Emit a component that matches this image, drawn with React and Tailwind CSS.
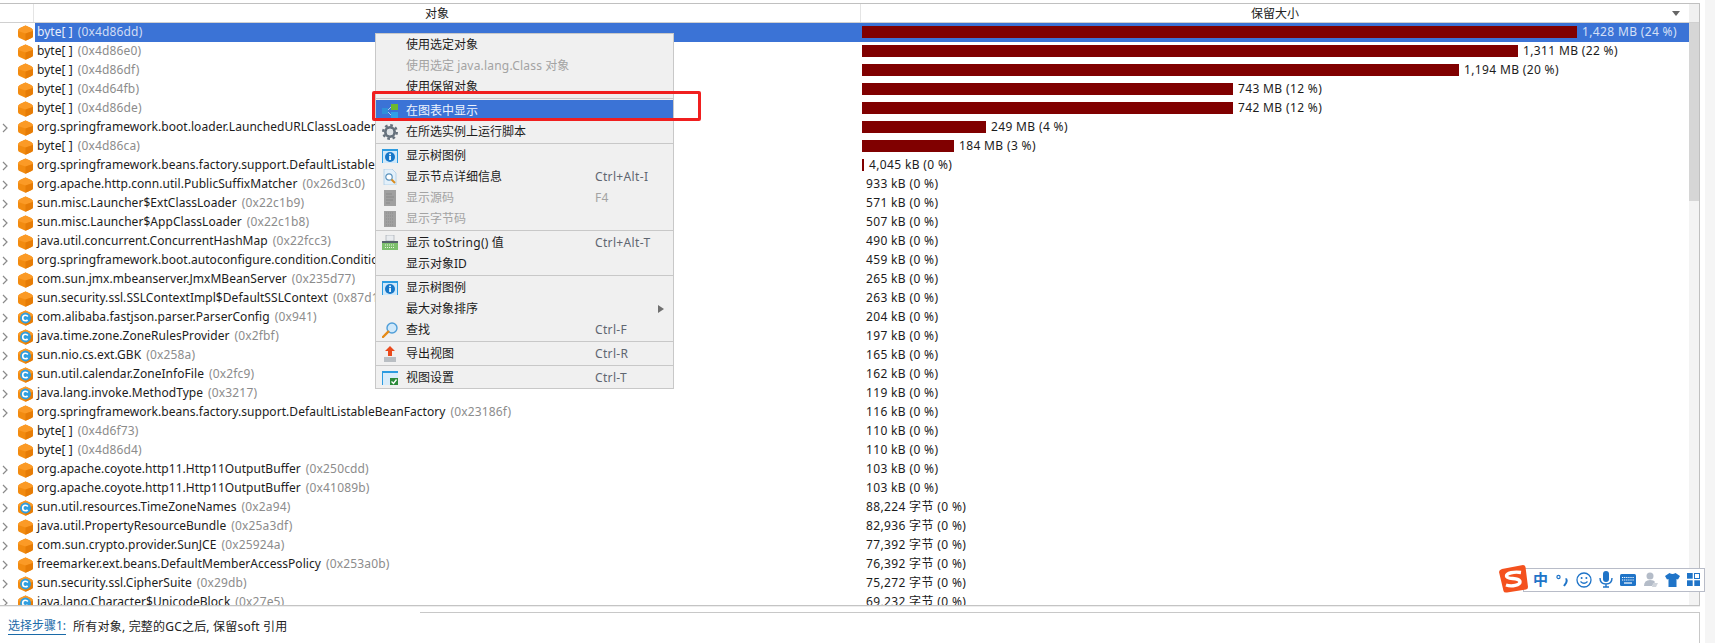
const rows = [
  { name: 'byte[ ]', addr: '(0x4d86dd)', size: '1,428 MB (24 %)', bar: 715, selected: true },
  { name: 'byte[ ]', addr: '(0x4d86e0)', size: '1,311 MB (22 %)', bar: 656 },
  { name: 'byte[ ]', addr: '(0x4d86df)', size: '1,194 MB (20 %)', bar: 597 },
  { name: 'byte[ ]', addr: '(0x4d64fb)', size: '743 MB (12 %)', bar: 371 },
  { name: 'byte[ ]', addr: '(0x4d86de)', size: '742 MB (12 %)', bar: 371 },
  { name: 'org.springframework.boot.loader.LaunchedURLClassLoader', addr: '(0x2f1c9)', size: '249 MB (4 %)', bar: 124, open: true },
  { name: 'byte[ ]', addr: '(0x4d86ca)', size: '184 MB (3 %)', bar: 92 },
  { name: 'org.springframework.beans.factory.support.DefaultListableBeanFactory', addr: '(0x2318a)', size: '4,045 kB (0 %)', bar: 2, open: true },
  { name: 'org.apache.http.conn.util.PublicSuffixMatcher', addr: '(0x26d3c0)', size: '933 kB (0 %)', open: true },
  { name: 'sun.misc.Launcher$ExtClassLoader', addr: '(0x22c1b9)', size: '571 kB (0 %)', open: true },
  { name: 'sun.misc.Launcher$AppClassLoader', addr: '(0x22c1b8)', size: '507 kB (0 %)', open: true },
  { name: 'java.util.concurrent.ConcurrentHashMap', addr: '(0x22fcc3)', size: '490 kB (0 %)', open: true },
  { name: 'org.springframework.boot.autoconfigure.condition.ConditionEvaluationReport', addr: '', size: '459 kB (0 %)', open: true },
  { name: 'com.sun.jmx.mbeanserver.JmxMBeanServer', addr: '(0x235d77)', size: '265 kB (0 %)', open: true },
  { name: 'sun.security.ssl.SSLContextImpl$DefaultSSLContext', addr: '(0x87d1)', size: '263 kB (0 %)', open: true },
  { name: 'com.alibaba.fastjson.parser.ParserConfig', addr: '(0x941)', size: '204 kB (0 %)', open: true, cls: true },
  { name: 'java.time.zone.ZoneRulesProvider', addr: '(0x2fbf)', size: '197 kB (0 %)', open: true, cls: true },
  { name: 'sun.nio.cs.ext.GBK', addr: '(0x258a)', size: '165 kB (0 %)', open: true, cls: true },
  { name: 'sun.util.calendar.ZoneInfoFile', addr: '(0x2fc9)', size: '162 kB (0 %)', open: true, cls: true },
  { name: 'java.lang.invoke.MethodType', addr: '(0x3217)', size: '119 kB (0 %)', open: true, cls: true },
  { name: 'org.springframework.beans.factory.support.DefaultListableBeanFactory', addr: '(0x23186f)', size: '116 kB (0 %)', open: true },
  { name: 'byte[ ]', addr: '(0x4d6f73)', size: '110 kB (0 %)' },
  { name: 'byte[ ]', addr: '(0x4d86d4)', size: '110 kB (0 %)' },
  { name: 'org.apache.coyote.http11.Http11OutputBuffer', addr: '(0x250cdd)', size: '103 kB (0 %)', open: true },
  { name: 'org.apache.coyote.http11.Http11OutputBuffer', addr: '(0x41089b)', size: '103 kB (0 %)', open: true },
  { name: 'sun.util.resources.TimeZoneNames', addr: '(0x2a94)', size: '88,224 字节 (0 %)', open: true, cls: true },
  { name: 'java.util.PropertyResourceBundle', addr: '(0x25a3df)', size: '82,936 字节 (0 %)', open: true },
  { name: 'com.sun.crypto.provider.SunJCE', addr: '(0x25924a)', size: '77,392 字节 (0 %)', open: true },
  { name: 'freemarker.ext.beans.DefaultMemberAccessPolicy', addr: '(0x253a0b)', size: '76,392 字节 (0 %)', open: true },
  { name: 'sun.security.ssl.CipherSuite', addr: '(0x29db)', size: '75,272 字节 (0 %)', open: true, cls: true },
  { name: 'java.lang.Character$UnicodeBlock', addr: '(0x27e5)', size: '69,232 字节 (0 %)', open: true, cls: true },
];

const HEX = 'M7.5 0.5 L13 3 Q15 4 15 6 L15 11 Q15 12.5 13.5 13 L7.5 15.8 L1.5 13 Q0 12.5 0 11 L0 6 Q0 4 2 3 Z';

function NodeIcon({ cls }) {
  return (
    <svg width="15" height="16" viewBox="0 0 15 16" className="shrink-0">
      <path d={HEX} fill="#f28b10" />
      <path d="M7.5 0.5 L13 3 Q15 4 15 6 L7.5 8.5 L0 6 Q0 4 2 3 Z" fill="#fb9a26" />
      <path d="M7.5 8.5 L15 6 L15 11 Q15 12.5 13.5 13 L7.5 15.8 Z" fill="#e67c06" />
      {cls && <circle cx="7.5" cy="8" r="5.4" fill="#2f9ee0" />}
      {cls && <circle cx="7.5" cy="8" r="2.8" fill="none" stroke="#fff" strokeWidth="1.6" strokeDasharray="13.5 4.1" strokeDashoffset="-2" />}
    </svg>
  );
}

function Chevron() {
  return (
    <svg width="6" height="10" viewBox="0 0 6 10" className="shrink-0">
      <path d="M1 1 L5 5 L1 9" fill="none" stroke="#8a8a8a" strokeWidth="1.2" />
    </svg>
  );
}

function Row({ row }) {
  const { name, addr, size, bar, open, cls, selected } = row;
  return (
    <div className="flex h-[19px] shrink-0 items-center">
      <div className="flex w-[18px] shrink-0 items-center pl-[2px]">{open && <Chevron />}</div>
      <NodeIcon cls={cls} />
      <div className={`ml-[2px] flex h-full w-[826px] shrink-0 items-center overflow-hidden whitespace-nowrap pb-[1px] pl-[2px] tracking-[0.05px] ${selected ? 'bg-[#3b73d6] text-[#e8eefb]' : 'text-[#1c1c1c]'}`}>
        {name}
        {addr && <span className={`ml-[5px] tracking-[0.15px] ${selected ? 'text-[#d0dcf4]' : 'text-[#8c8c8c]'}`}>{addr}</span>}
      </div>
      <div className={`flex h-full flex-1 items-center whitespace-nowrap pb-[1px] pl-[1px] tracking-[0.35px] ${selected ? 'bg-[#3b73d6] text-[#d5e0f6]' : 'text-[#1c1c1c]'}`}>
        {bar ? <div className="h-[12px] bg-[#800000]" style={{ width: bar }} /> : null}
        <span className={bar ? 'ml-[5px]' : 'ml-[4px]'}>{size}</span>
      </div>
    </div>
  );
}

function ChartIcon() {
  return (
    <svg width="16" height="14" viewBox="0 0 16 14">
      <rect x="0" y="4" width="6" height="6" fill="#2f8fd8" />
      <rect x="9" y="0" width="7" height="6" fill="#6cb82e" />
      <rect x="9" y="8" width="7" height="6" fill="#2f9fe8" />
      <path d="M6 6 L9 3 M6 8 L9 11" stroke="#a9cdec" strokeWidth="1" />
    </svg>
  );
}

function GearIcon() {
  return (
    <svg width="16" height="16" viewBox="0 0 16 16">
      <circle cx="8" cy="8" r="4.6" fill="none" stroke="#66717c" strokeWidth="2.8" />
      <circle cx="8" cy="8" r="6.8" fill="none" stroke="#66717c" strokeWidth="2.4" strokeDasharray="2.67 2.67" />
      <circle cx="8" cy="8" r="3.2" fill="#dfe3e6" />
    </svg>
  );
}

function InfoIcon() {
  return (
    <svg width="16" height="14" viewBox="0 0 16 14">
      <rect x="0" y="0" width="16" height="14" fill="#cfe8fa" />
      <rect x="0" y="0" width="16" height="2" fill="#2c9be0" />
      <rect x="0" y="0" width="1" height="14" fill="#2c9be0" />
      <rect x="15" y="0" width="1" height="14" fill="#2c9be0" />
      <circle cx="8" cy="8" r="5" fill="#1677c8" />
      <rect x="7.2" y="7" width="1.7" height="4" fill="#fff" />
      <rect x="7.2" y="4.6" width="1.7" height="1.6" fill="#fff" />
    </svg>
  );
}

function DetailIcon() {
  return (
    <svg width="14" height="16" viewBox="0 0 14 16">
      <path d="M1 0 H9 L13 4 V16 H1 Z" fill="#e3f0fa" stroke="#a9cbe6" strokeWidth="0.8" />
      <circle cx="6" cy="8" r="3.2" fill="#fff" stroke="#5b93bd" strokeWidth="1.2" />
      <path d="M8.5 10.5 L12 14" stroke="#d98b1e" strokeWidth="2" />
    </svg>
  );
}

function SourceIcon() {
  return (
    <svg width="12" height="16" viewBox="0 0 12 16">
      <rect width="12" height="16" fill="#a0a0a0" />
      <path d="M2 4 H8 M2 7 H10 M2 10 H9 M2 13 H6" stroke="#8a8a8a" strokeWidth="1" />
    </svg>
  );
}

function BytesIcon() {
  return (
    <svg width="12" height="16" viewBox="0 0 12 16">
      <rect width="12" height="16" fill="#a0a0a0" />
      <path d="M2 2 H10 M2 5 H10 M2 8 H10 M2 11 H10 M2 14 H10" stroke="#8c8c8c" strokeWidth="1" strokeDasharray="1 1" />
    </svg>
  );
}

function PrinterIcon() {
  return (
    <svg width="16" height="15" viewBox="0 0 16 15">
      <path d="M4 0 H12 V6 H4 Z" fill="#e9ecef" stroke="#9aa3aa" strokeWidth="0.6" />
      <path d="M0 6 H16 V8 H0 Z" fill="#55616b" />
      <path d="M0 8 H16 V15 H0 Z" fill="#7cbf6d" />
      <path d="M3 10 H13 M3 12.5 H13" stroke="#e8f5e2" strokeWidth="1" strokeDasharray="1 1" />
    </svg>
  );
}

function SearchIcon() {
  return (
    <svg width="16" height="16" viewBox="0 0 16 16">
      <circle cx="10" cy="6" r="5" fill="#cfe8fa" stroke="#4f9ed8" strokeWidth="1.4" />
      <path d="M6.3 9.7 L1 15" stroke="#e58a17" strokeWidth="2.4" strokeLinecap="round" />
    </svg>
  );
}

function ExportIcon() {
  return (
    <svg width="12" height="16" viewBox="0 0 12 16">
      <path d="M6 0 L11 5 H8 V10 H4 V5 H1 Z" fill="#ea4a1c" />
      <rect x="0" y="11" width="12" height="5" fill="#b9bec3" />
    </svg>
  );
}

function WindowIcon() {
  return (
    <svg width="16" height="14" viewBox="0 0 16 14">
      <rect x="0" y="0" width="16" height="14" fill="#d8ecfa" />
      <rect x="0" y="0" width="16" height="2" fill="#2c9be0" />
      <rect x="0" y="0" width="1" height="14" fill="#2c9be0" />
      <rect x="8" y="7" width="8" height="7" fill="#2c8a3a" />
      <path d="M9.5 10.5 L11.5 12.5 L14.5 8.5" fill="none" stroke="#fff" strokeWidth="1.3" />
    </svg>
  );
}

function MenuItem({ icon, label, keys, disabled, active, arrow }) {
  return (
    <div className={`flex h-[21px] items-center ${active ? 'bg-[#3b73d6] text-[#eef3fc]' : disabled ? 'text-[#a3a3a3]' : 'text-[#1c1c1c]'}`}>
      <div className="flex w-[30px] shrink-0 items-center justify-center pr-[2px]">{icon}</div>
      <span className="w-[189px] shrink-0 whitespace-nowrap">{label}</span>
      <span className={`tracking-[0.35px] ${disabled ? 'text-[#a3a3a3]' : 'text-[#5f6670]'}`}>{keys}</span>
      {arrow && (
        <svg width="6" height="8" viewBox="0 0 6 8" className="ml-[63px]">
          <path d="M0 0 L6 4 L0 8 Z" fill="#707070" />
        </svg>
      )}
    </div>
  );
}

function MenuSep() {
  return <div className="my-[1px] h-[1px] bg-[#c8c8c8]" />;
}

function ContextMenu() {
  return (
    <div className="absolute left-[375px] top-[33px] w-[299px] border border-[#c8c8c8] bg-[#f0f0f0]">
      <MenuItem label="使用选定对象" />
      <MenuItem label={<>使用选定 <span className="tracking-[0.2px]">java.lang.Class</span> 对象</>} disabled />
      <MenuItem label="使用保留对象" />
      <MenuSep />
      <MenuItem label="在图表中显示" icon={<ChartIcon />} active />
      <MenuItem label="在所选实例上运行脚本" icon={<GearIcon />} />
      <MenuSep />
      <MenuItem label="显示树图例" icon={<InfoIcon />} />
      <MenuItem label="显示节点详细信息" icon={<DetailIcon />} keys="Ctrl+Alt-I" />
      <MenuItem label="显示源码" icon={<SourceIcon />} keys="F4" disabled />
      <MenuItem label="显示字节码" icon={<BytesIcon />} disabled />
      <MenuSep />
      <MenuItem label={<>显示 <span className="tracking-[0.3px]">toString()</span> 值</>} icon={<PrinterIcon />} keys="Ctrl+Alt-T" />
      <MenuItem label="显示对象ID" />
      <MenuSep />
      <MenuItem label="显示树图例" icon={<InfoIcon />} />
      <MenuItem label="最大对象排序" arrow />
      <MenuItem label="查找" icon={<SearchIcon />} keys="Ctrl-F" />
      <MenuSep />
      <MenuItem label="导出视图" icon={<ExportIcon />} keys="Ctrl-R" />
      <MenuSep />
      <MenuItem label="视图设置" icon={<WindowIcon />} keys="Ctrl-T" />
    </div>
  );
}

function ImeBar() {
  return (
    <div className="absolute left-[1499px] top-[565px] flex h-[28px] items-center">
      <svg width="29" height="28" viewBox="0 0 29 28" className="relative z-10 -mr-[5px] shrink-0">
        <path d="M3 4 L24 0 Q26 0 26.5 2 L29 22 Q29 24 27 24.5 L8 27.5 Q5 28 4.5 26 L0 7 Q0 5 3 4 Z" fill="#f4511e" />
        <path d="M22 7.5 C15 6.5 7.5 8 7.5 11 C7.5 15 21 12 21 17 C21 20 13 22 7 20" fill="none" stroke="#fff" strokeWidth="3.4" />
      </svg>
      <div className="mt-[1px] flex h-[24px] w-[182px] items-center border border-[#b8bcc8] bg-white pl-[9px] text-[#1f74c8]">
        <span className="w-[15px] text-[15px] font-bold leading-none">中</span>
        <svg width="12" height="14" viewBox="0 0 12 14" className="ml-[8px]">
          <circle cx="2.5" cy="4" r="1.6" fill="none" stroke="#1f74c8" strokeWidth="1.2" />
          <path d="M9.5 6 C11 6 11 8 10 10 L8 13" fill="none" stroke="#1f74c8" strokeWidth="2" />
        </svg>
        <svg width="16" height="16" viewBox="0 0 16 16" className="ml-[8px]">
          <circle cx="8" cy="8" r="7" fill="none" stroke="#1f74c8" strokeWidth="1.3" />
          <circle cx="5.6" cy="6" r="1" fill="#1f74c8" />
          <circle cx="10.4" cy="6" r="1" fill="#1f74c8" />
          <path d="M4.5 9.5 Q8 13 11.5 9.5" fill="none" stroke="#1f74c8" strokeWidth="1.2" />
        </svg>
        <svg width="14" height="17" viewBox="0 0 14 17" className="ml-[7px]">
          <rect x="4" y="0" width="6" height="11" rx="3" fill="#1f74c8" />
          <path d="M1 7 Q1 13 7 13 Q13 13 13 7 M7 13 V16 M4 16 H10" fill="none" stroke="#1f74c8" strokeWidth="1.4" />
        </svg>
        <svg width="16" height="12" viewBox="0 0 16 12" className="ml-[7px]">
          <rect width="16" height="12" rx="1.5" fill="#1f74c8" />
          <path d="M2 3.5 H14 M2 6 H14" stroke="#fff" strokeWidth="1.2" strokeDasharray="1.2 0.9" />
          <path d="M4 9 H12" stroke="#fff" strokeWidth="1.2" />
        </svg>
        <svg width="14" height="15" viewBox="0 0 14 15" className="ml-[8px]">
          <circle cx="6" cy="4" r="3.5" fill="#b4bcc8" />
          <path d="M0 14 Q0 8 6 8 Q10 8 11 10 L8 14 Z" fill="#b4bcc8" />
          <path d="M9 11 H14 L12 15 H8 Z" fill="#cfd4db" />
        </svg>
        <svg width="15" height="14" viewBox="0 0 15 14" className="ml-[7px]">
          <path d="M4.5 0 Q7.5 2 10.5 0 L15 3 L13 6.5 L11.5 6 V14 H3.5 V6 L2 6.5 L0 3 Z" fill="#1f74c8" />
        </svg>
        <svg width="13" height="13" viewBox="0 0 13 13" className="ml-[7px]">
          <rect x="0" y="0" width="5.7" height="5.7" fill="#1f74c8" />
          <rect x="7.5" y="0.5" width="5" height="5" fill="none" stroke="#1f74c8" strokeWidth="1" />
          <rect x="0" y="7.3" width="5.7" height="5.7" fill="#1f74c8" />
          <rect x="7.3" y="7.3" width="5.7" height="5.7" fill="#1f74c8" />
        </svg>
      </div>
    </div>
  );
}

export default function App() {
  return (
    <div className="relative flex h-[643px] w-full overflow-hidden bg-white font-['Noto_Sans','Noto_Sans_CJK_SC',sans-serif] text-[12px] leading-none">
      <div className="flex w-[1700px] shrink-0 flex-col pt-[3px]">
        <div className="flex h-[602px] flex-col border-t border-r border-[#c0c0c0]">
          <div className="flex h-[19px] shrink-0 border-b border-[#d0d0d0] text-[#222]">
            <div className="w-[34px] shrink-0 border-r border-[#e4e4e4]" />
            <div className="flex w-[827px] shrink-0 items-center justify-center border-r border-[#e4e4e4] pt-[2px] pr-[20px]">对象</div>
            <div className="relative flex flex-1 items-center justify-center pt-[2px]">
              保留大小
              <svg width="8" height="5" viewBox="0 0 8 5" className="absolute right-[9px] top-[7px]">
                <path d="M0 0 H8 L4 5 Z" fill="#666" />
              </svg>
            </div>
            <div className="w-[10px] shrink-0 bg-[#f0f0f0]" />
          </div>
          <div className="flex min-h-0 flex-1">
            <div className="flex min-w-0 flex-1 flex-col overflow-hidden">
              {rows.map((row, i) => <Row key={i} row={row} />)}
            </div>
            <div className="w-[10px] shrink-0 bg-[#f3f3f3]">
              <div className="h-[178px] bg-[#d6d6d6]" />
            </div>
          </div>
        </div>
        <div className="h-[1px] shrink-0 bg-[#c4c4c4]" />
        <div className="h-[1px] shrink-0 bg-[#eeeeee]" />
        <div className="mt-[5px] flex flex-1">
          <div className="flex w-[420px] shrink-0 items-center pb-[1px] pl-[8px] text-[#222]">
            <span className="border-b border-[#1a6aa8] pb-[2px] text-[#1a6aa8]">选择步骤1:</span>
            <span className="ml-[7px] tracking-[0.2px]">所有对象, 完整的GC之后, 保留soft 引用</span>
          </div>
          <div className="flex-1 border-t border-r border-[#c8c8c8]" />
        </div>
      </div>
      <div className="ml-[5px] flex-1 bg-[#f5f5f5]" />
      <ContextMenu />
      <div className="absolute left-[372px] top-[91px] h-[30px] w-[329px] rounded-[2px] border-[3px] border-[#f01f1f]" />
      <ImeBar />
    </div>
  );
}
